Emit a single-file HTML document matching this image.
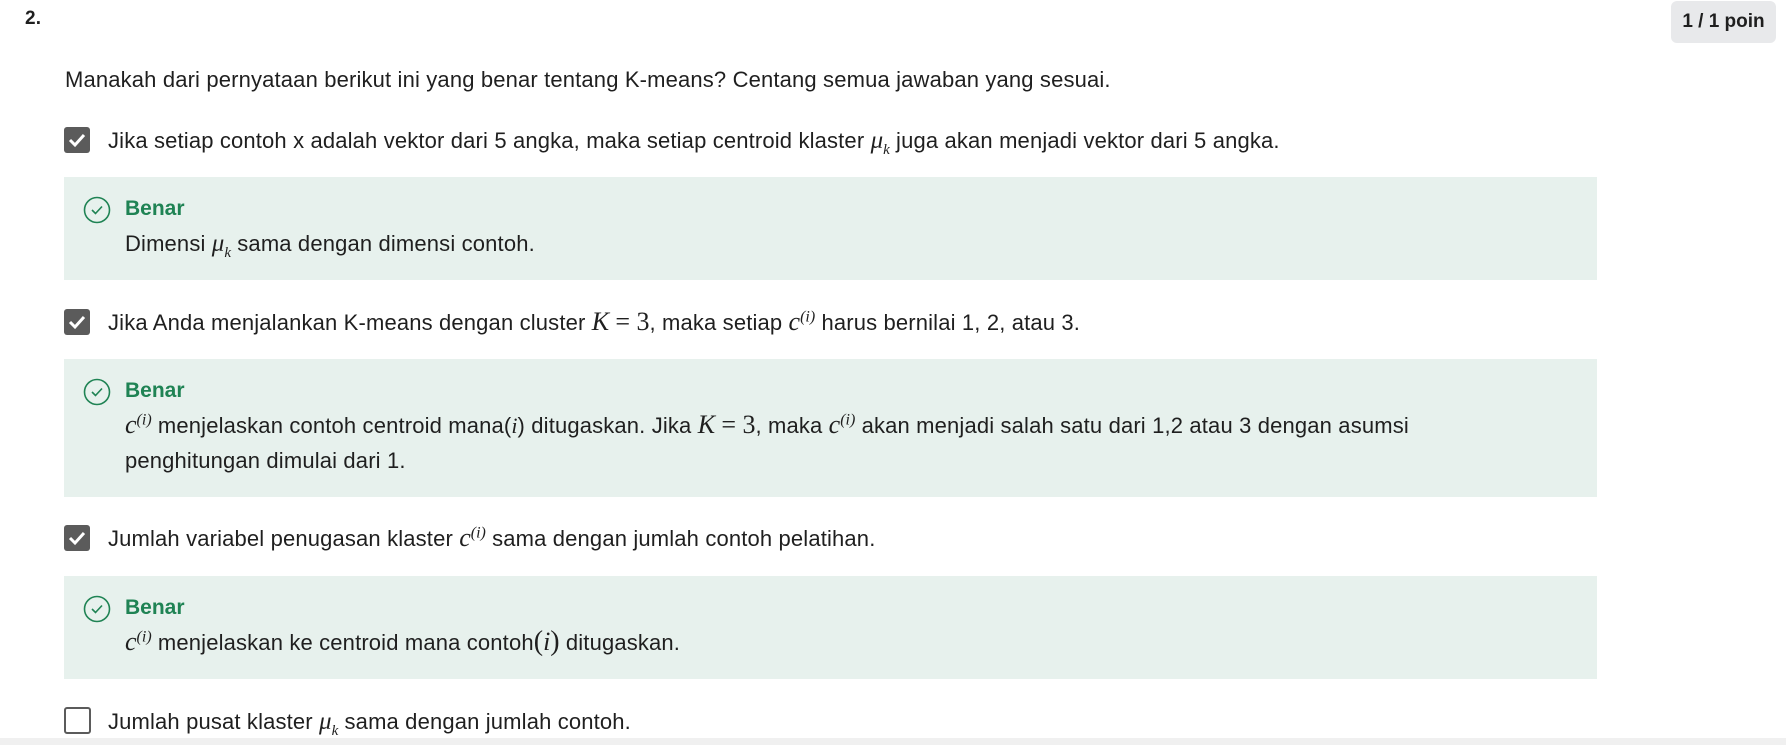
<!DOCTYPE html>
<html><head><meta charset="utf-8"><style>
body{margin:0;width:1786px;height:745px;background:#fff;position:relative;overflow:hidden;font-family:"Liberation Sans",sans-serif;color:#1f1f1f;font-size:22px;letter-spacing:0.15px}
.a{position:absolute;white-space:nowrap}
.m{font-family:"Liberation Serif",serif;font-style:italic;font-size:26px;letter-spacing:0}
.mu{font-family:"Liberation Serif",serif;font-style:italic;font-size:25px;letter-spacing:0}
sub,sup{font-size:15px;line-height:0}
.cb{position:absolute;left:64px;width:26px;height:26px;border-radius:3px;background:#5b5b5b}
.cb svg{position:absolute;left:3px;top:3px}
.cbe{position:absolute;left:64px;width:23px;height:23px;border:2px solid #5b5b5b;border-radius:3px;background:#fff}
.box{position:absolute;left:64px;width:1533px;background:#e7f1ed}
.ic{position:absolute;left:83px}
.ben{position:absolute;left:125px;color:#1f8354;font-weight:bold;font-size:21px;letter-spacing:0}
.badge{position:absolute;left:1671px;top:1px;width:105px;height:42px;background:#e8e9eb;border-radius:6px;font-weight:bold;font-size:19px;line-height:42px;text-align:center;letter-spacing:0}
</style></head><body>
<div class="a" style="left:25px;top:8px;font-weight:bold;font-size:19px">2.</div>
<div class="badge">1 / 1 poin</div>
<div class="a" style="left:65px;top:67px">Manakah dari pernyataan berikut ini yang benar tentang K-means? Centang semua jawaban yang sesuai.</div>

<div class="cb" style="top:127px"><svg width="20" height="20" viewBox="0 0 20 20"><path d="M3 10l5 5 9-10" stroke="#fff" stroke-width="3" fill="none"/></svg></div>
<div class="a" style="left:108px;top:127px">Jika setiap contoh x adalah vektor dari 5 angka, maka setiap centroid klaster <span class="mu">μ<sub>k</sub></span> juga akan menjadi vektor dari 5 angka.</div>
<div class="box" style="top:177px;height:103px"></div>
<svg class="ic" style="top:196px" width="28" height="28" viewBox="0 0 28 28"><circle cx="14" cy="14" r="12.5" stroke="#1f8354" stroke-width="1.6" fill="none"/><path d="M9 14l3.5 3.5 6.5-7" stroke="#1f8354" stroke-width="1.6" fill="none"/></svg>
<div class="ben" style="top:197px">Benar</div>
<div class="a" style="left:125px;top:230px">Dimensi <span class="mu">μ<sub>k</sub></span> sama dengan dimensi contoh.</div>

<div class="cb" style="top:309px"><svg width="20" height="20" viewBox="0 0 20 20"><path d="M3 10l5 5 9-10" stroke="#fff" stroke-width="3" fill="none"/></svg></div>
<div class="a" style="left:108px;top:307px">Jika Anda menjalankan K-means dengan cluster <span class="m">K</span> <span class="m" style="font-style:normal">= 3</span>, maka setiap <span class="m">c</span><sup class="m" style="font-size:16px">(i)</sup> harus bernilai 1, 2, atau 3.</div>
<div class="box" style="top:359px;height:138px"></div>
<svg class="ic" style="top:378px" width="28" height="28" viewBox="0 0 28 28"><circle cx="14" cy="14" r="12.5" stroke="#1f8354" stroke-width="1.6" fill="none"/><path d="M9 14l3.5 3.5 6.5-7" stroke="#1f8354" stroke-width="1.6" fill="none"/></svg>
<div class="ben" style="top:379px">Benar</div>
<div class="a" style="left:125px;top:410px"><span class="m">c</span><sup class="m" style="font-size:16px">(i)</sup> menjelaskan contoh centroid mana(<span class="m" style="font-size:22px">i</span>) ditugaskan. Jika <span class="m">K</span> <span class="m" style="font-style:normal">= 3</span>, maka <span class="m">c</span><sup class="m" style="font-size:16px">(i)</sup> akan menjadi salah satu dari 1,2 atau 3 dengan asumsi</div>
<div class="a" style="left:125px;top:448px">penghitungan dimulai dari 1.</div>

<div class="cb" style="top:525px"><svg width="20" height="20" viewBox="0 0 20 20"><path d="M3 10l5 5 9-10" stroke="#fff" stroke-width="3" fill="none"/></svg></div>
<div class="a" style="left:108px;top:523px">Jumlah variabel penugasan klaster <span class="m">c</span><sup class="m" style="font-size:16px">(i)</sup> sama dengan jumlah contoh pelatihan.</div>
<div class="box" style="top:576px;height:103px"></div>
<svg class="ic" style="top:595px" width="28" height="28" viewBox="0 0 28 28"><circle cx="14" cy="14" r="12.5" stroke="#1f8354" stroke-width="1.6" fill="none"/><path d="M9 14l3.5 3.5 6.5-7" stroke="#1f8354" stroke-width="1.6" fill="none"/></svg>
<div class="ben" style="top:596px">Benar</div>
<div class="a" style="left:125px;top:626px"><span class="m">c</span><sup class="m" style="font-size:16px">(i)</sup> menjelaskan ke centroid mana contoh<span class="m" style="font-style:normal;font-size:28px">(</span><span class="m">i</span><span class="m" style="font-style:normal;font-size:28px">)</span> ditugaskan.</div>

<div class="cbe" style="top:707px"></div>
<div class="a" style="left:108px;top:708px">Jumlah pusat klaster <span class="mu">μ<sub>k</sub></span> sama dengan jumlah contoh.</div>
<div style="position:absolute;left:0;top:738px;width:1786px;height:7px;background:#f0f0f0"></div>
</body></html>
